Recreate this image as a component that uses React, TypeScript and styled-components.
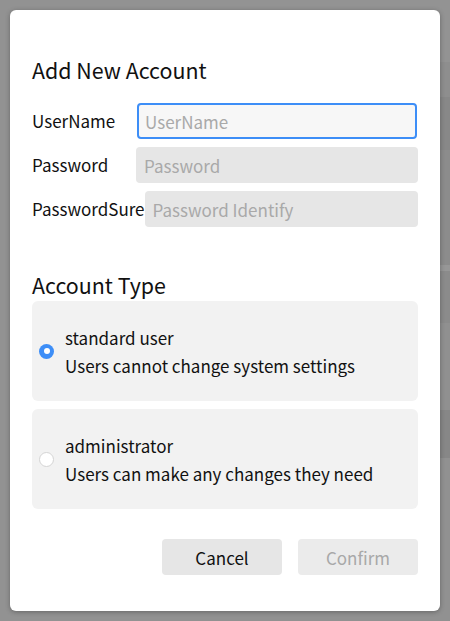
import React, { useState } from "react";
import styled, { createGlobalStyle } from "styled-components";

const GlobalStyle = createGlobalStyle`
  html, body {
    margin: 0;
    padding: 0;
    height: 100%;
  }
  body {
    font-family: "Noto Sans CJK SC", "Noto Sans", sans-serif;
    color: #1a1a1a;
    background: #929292;
  }
  #root {
    height: 100%;
  }
  * { box-sizing: border-box; }
`;

const Screen = styled.div`
  position: relative;
  width: 450px;
  height: 621px;
  overflow: hidden;
`;

const Backdrop = styled.div`
  display: flex;
  height: 100%;
`;

const BackdropMain = styled.div`
  flex: 1;
  background: #929292;
`;

const BackdropList = styled.div`
  width: 300px;
  display: flex;
  flex-direction: column;
`;

const Band = styled.div<{ $h: number; $c: string }>`
  height: ${(p) => p.$h}px;
  flex: ${(p) => (p.$h === 0 ? 1 : "none")};
  background: ${(p) => p.$c};
`;

const Overlay = styled.div`
  position: absolute;
  inset: 0;
  padding: 10px;
  display: flex;
`;

const Dialog = styled.div`
  flex: 1;
  background: #ffffff;
  border-radius: 6px;
  box-shadow: 0 1px 5px rgba(0, 0, 0, 0.3);
  padding: 48px 22px 36px 22px;
  display: flex;
  flex-direction: column;
`;

const Title = styled.h2`
  margin: 0 0 21px 0;
  font-size: 21.4px;
  font-weight: 400;
  line-height: 24px;
  color: #111;
`;

const Form = styled.div`
  display: flex;
  flex-direction: column;
  gap: 8px;
`;

const Row = styled.label`
  display: flex;
  align-items: center;
  height: 36px;
`;

const Label = styled.span`
  min-width: 104px;
  font-size: 17px;
  color: #111;
  white-space: nowrap;
  padding-bottom: 1px;
`;

const Input = styled.input<{ $focused?: boolean }>`
  flex: 1;
  height: 36px;
  min-width: 0;
  border-radius: 4px;
  border: ${(p) => (p.$focused ? "2px solid #3d8ef7" : "none")};
  background: ${(p) => (p.$focused ? "#f7f7f7" : "#e6e6e6")};
  padding: 0 ${(p) => (p.$focused ? 6 : 8)}px;
  font-family: inherit;
  font-size: 17px;
  color: #111;
  outline: none;
  margin-left: ${(p) => (p.$focused ? 1 : 0)}px;
  margin-right: ${(p) => (p.$focused ? 1 : 0)}px;
  &::placeholder {
    color: #a9a9a9;
  }
`;

const SectionTitle = styled.h3`
  margin: 45px 0 3px 0;
  font-size: 21.4px;
  font-weight: 400;
  line-height: 26px;
  color: #111;
`;

const Options = styled.div`
  display: flex;
  flex-direction: column;
  gap: 8px;
`;

const OptionCard = styled.label`
  display: flex;
  align-items: center;
  gap: 11px;
  height: 100px;
  padding: 0 0 0 7px;
  background: #f2f2f2;
  border-radius: 6px;
  cursor: pointer;
`;

const Radio = styled.span<{ $checked: boolean }>`
  width: 15px;
  height: 15px;
  border-radius: 50%;
  flex: none;
  background: ${(p) => (p.$checked ? "#3d8ef7" : "#ffffff")};
  border: ${(p) => (p.$checked ? "none" : "1px solid #d4d4d4")};
  display: flex;
  align-items: center;
  justify-content: center;
  &::after {
    content: "";
    display: ${(p) => (p.$checked ? "block" : "none")};
    width: 6px;
    height: 6px;
    border-radius: 50%;
    background: #ffffff;
  }
`;

const OptionText = styled.div`
  display: flex;
  flex-direction: column;
  font-size: 17px;
  line-height: 28px;
  color: #111;
  padding-top: 1px;
`;

const Footer = styled.div`
  margin-top: auto;
  display: flex;
  justify-content: flex-end;
  gap: 16px;
`;

const Button = styled.button<{ $disabled?: boolean }>`
  width: 120px;
  height: 36px;
  border: none;
  border-radius: 4px;
  font-family: inherit;
  font-size: 17px;
  background: ${(p) => (p.$disabled ? "#ebebeb" : "#e6e6e6")};
  color: ${(p) => (p.$disabled ? "#a8a8a8" : "#111")};
  padding: 0;
  cursor: ${(p) => (p.$disabled ? "default" : "pointer")};
`;

const bands: [number, string][] = [
  [62, "#939393"],
  [35, "#8e8e8e"],
  [53, "#888888"],
  [115, "#8c8c8c"],
  [6, "#979797"],
  [52, "#8b8b8b"],
  [87, "#909090"],
  [48, "#878787"],
  [0, "#919191"],
];

export default function App() {
  const [type, setType] = useState<"standard" | "admin">("standard");
  return (
    <>
      <GlobalStyle />
      <Screen>
        <Backdrop>
          <BackdropMain />
          <BackdropList>
            {bands.map(([h, c], i) => (
              <Band key={i} $h={h} $c={c} />
            ))}
          </BackdropList>
        </Backdrop>
        <Overlay>
          <Dialog>
            <Title>Add New Account</Title>
            <Form>
              <Row>
                <Label>UserName</Label>
                <Input $focused placeholder="UserName" />
              </Row>
              <Row>
                <Label>Password</Label>
                <Input type="password" placeholder="Password" />
              </Row>
              <Row>
                <Label>PasswordSure</Label>
                <Input type="password" placeholder="Password Identify" />
              </Row>
            </Form>
            <SectionTitle>Account Type</SectionTitle>
            <Options>
              <OptionCard onClick={() => setType("standard")}>
                <Radio $checked={type === "standard"} />
                <OptionText>
                  <span>standard user</span>
                  <span>Users cannot change system settings</span>
                </OptionText>
              </OptionCard>
              <OptionCard onClick={() => setType("admin")}>
                <Radio $checked={type === "admin"} />
                <OptionText>
                  <span>administrator</span>
                  <span>Users can make any changes they need</span>
                </OptionText>
              </OptionCard>
            </Options>
            <Footer>
              <Button>Cancel</Button>
              <Button $disabled disabled>
                Confirm
              </Button>
            </Footer>
          </Dialog>
        </Overlay>
      </Screen>
    </>
  );
}
